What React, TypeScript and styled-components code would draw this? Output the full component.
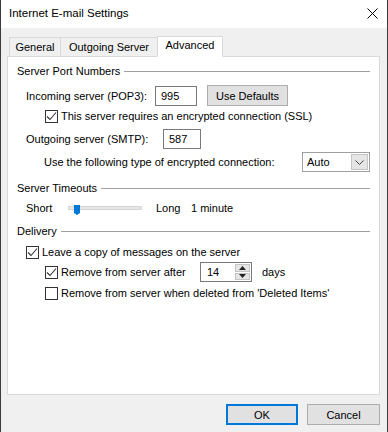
import React from "react";
import styled, { createGlobalStyle } from "styled-components";

const GlobalStyle = createGlobalStyle`
  html, body { margin: 0; padding: 0; background: #f0f0f0; }
  body { font-family: "Liberation Sans", Arial, sans-serif; font-size: 11px; color: #000; }
  * { box-sizing: border-box; }
`;

const Window = styled.div`
  width: 388px;
  height: 432px;
  border-left: 1px solid #3c3c3c;
  border-right: 1px solid #3c3c3c;
  background: #f0f0f0;
  display: flex;
  flex-direction: column;
  overflow: hidden;
`;

const TitleBar = styled.div`
  height: 28px;
  background: #fff;
  display: flex;
  align-items: center;
  justify-content: space-between;
  padding: 0 9px 2px 8px;
`;

const Title = styled.span`
  font-size: 11.5px;
`;

const Body = styled.div`
  flex: 1;
  display: flex;
  flex-direction: column;
  padding: 7px 7px 0 6px;
`;

const TabStrip = styled.div`
  display: flex;
  align-items: flex-end;
  height: 21px;
  padding-left: 2px;
  position: relative;
  z-index: 1;
`;

const Tab = styled.div<{ $w: number; $active?: boolean }>`
  width: ${(p) => p.$w}px;
  height: ${(p) => (p.$active ? 21 : 19)}px;
  display: flex;
  align-items: center;
  justify-content: center;
  border: 1px solid #d9d9d9;
  border-bottom: ${(p) => (p.$active ? "1px solid #fff" : "none")};
  border-right: ${(p) => (p.$active ? "1px solid #d9d9d9" : "none")};
  background: ${(p) => (p.$active ? "#fff" : "#f0f0f0")};
  margin-bottom: ${(p) => (p.$active ? -1 : 0)}px;
  padding-bottom: ${(p) => (p.$active ? 3 : 0)}px;
`;

const Panel = styled.div`
  height: 339px;
  background: #fff;
  border: 1px solid #d9d9d9;
  display: flex;
  flex-direction: column;
  padding: 6px 9px 0 9px;
`;

const Row = styled.div<{ $h: number; $mt: number; $pl?: number }>`
  height: ${(p) => p.$h}px;
  margin-top: ${(p) => p.$mt}px;
  padding-left: ${(p) => p.$pl ?? 0}px;
  display: flex;
  align-items: center;
  white-space: nowrap;
`;

const Rule = styled.div`
  flex: 1;
  height: 1px;
  background: #a0a0a0;
  margin-left: 4px;
`;

const Label = styled.span<{ $w?: number }>`
  ${(p) => (p.$w ? `width: ${p.$w}px;` : "")}
  display: inline-block;
  flex-shrink: 0;
`;

const TextInput = styled.div<{ $w: number }>`
  width: ${(p) => p.$w}px;
  height: 20px;
  border: 1px solid #7a7a7a;
  background: #fff;
  display: flex;
  align-items: center;
  padding-left: 5px;
`;

const Button = styled.div<{ $w: number; $default?: boolean; $ml?: number }>`
  width: ${(p) => p.$w}px;
  height: 21px;
  margin-left: ${(p) => p.$ml ?? 0}px;
  background: #e1e1e1;
  border: ${(p) => (p.$default ? "2px solid #0078d7" : "1px solid #adadad")};
  display: flex;
  align-items: center;
  justify-content: center;
`;

const Box = styled.div`
  width: 13px;
  height: 13px;
  border: 1px solid #333;
  background: #fff;
  margin-right: 3px;
  display: flex;
  align-items: center;
  justify-content: center;
  flex-shrink: 0;
`;

const Select = styled.div`
  width: 69px;
  height: 20px;
  border: 1px solid #a0a0a0;
  background: #fff;
  display: flex;
  align-items: center;
  justify-content: space-between;
  padding: 1px 1px 1px 4px;
`;

const SelectArrow = styled.div`
  width: 17px;
  height: 16px;
  background: #e5e5e5;
  border: 1px solid #c4c4c4;
  display: flex;
  align-items: center;
  justify-content: center;
`;

const Spin = styled.div`
  width: 52px;
  height: 20px;
  border: 1px solid #7a7a7a;
  background: #fff;
  display: flex;
  align-items: center;
  justify-content: space-between;
  padding: 1px 1px 1px 6px;
`;

const SpinButtons = styled.div`
  width: 15px;
  height: 16px;
  display: flex;
  flex-direction: column;
  gap: 1px;
`;

const SpinBtn = styled.div`
  flex: 1;
  background: #e5e5e5;
  border: 1px solid #c4c4c4;
  display: flex;
  align-items: center;
  justify-content: center;
`;

const Track = styled.div`
  width: 74px;
  height: 4px;
  background: #e7e7e7;
  border: 1px solid #d6d6d6;
  position: relative;
  margin: 0 14px 0 15px;
`;

const Thumb = styled.div`
  position: absolute;
  left: 5px;
  top: -2px;
  width: 6px;
  height: 8px;
  background: #0078d7;
  &::after {
    content: "";
    position: absolute;
    left: 0;
    top: 8px;
    border-left: 3px solid transparent;
    border-right: 3px solid transparent;
    border-top: 2px solid #0078d7;
  }
`;

const Gap = styled.span<{ $w: number }>`
  display: inline-block;
  width: ${(p) => p.$w}px;
`;

const Footer = styled.div`
  display: flex;
  justify-content: flex-end;
  gap: 9px;
  padding: 9px 0 0 0;
`;

const Check = () => (
  <svg width="11" height="11" viewBox="0 0 11 11">
    <path d="M1 5.5 L4 8.5 L10 1.5" fill="none" stroke="#333" strokeWidth="1.1" />
  </svg>
);

const Chevron = ({ up }: { up?: boolean }) => (
  <svg width="7" height="4" viewBox="0 0 7 4">
    <path d={up ? "M0 4 L3.5 0 L7 4 Z" : "M0 0 L3.5 4 L7 0 Z"} fill="#222" />
  </svg>
);

export default function App() {
  return (
    <>
      <GlobalStyle />
      <Window>
        <TitleBar>
          <Title>Internet E-mail Settings</Title>
          <svg width="11" height="11" viewBox="0 0 11 11">
            <path d="M0.5 0.5 L10.5 10.5 M10.5 0.5 L0.5 10.5" stroke="#000" strokeWidth="1" />
          </svg>
        </TitleBar>
        <Body>
          <TabStrip>
            <Tab $w={51}>General</Tab>
            <Tab $w={97}>Outgoing Server</Tab>
            <Tab $w={66} $active>Advanced</Tab>
          </TabStrip>
          <Panel>
            <Row $h={16} $mt={0}>
              <span>Server Port Numbers</span>
              <Rule />
            </Row>
            <Row $h={21} $mt={6} $pl={9}>
              <Label $w={129}>Incoming server (POP3):</Label>
              <TextInput $w={42}>995</TextInput>
              <Button $w={81} $ml={10}>Use Defaults</Button>
            </Row>
            <Row $h={16} $mt={2} $pl={28}>
              <Box><Check /></Box>
              <span>This server requires an encrypted connection (SSL)</span>
            </Row>
            <Row $h={20} $mt={5} $pl={9}>
              <Label $w={137}>Outgoing server (SMTP):</Label>
              <TextInput $w={38}>587</TextInput>
            </Row>
            <Row $h={20} $mt={3} $pl={27}>
              <Label $w={258}>Use the following type of encrypted connection:</Label>
              <Select>
                <span>Auto</span>
                <SelectArrow>
                  <svg width="9" height="5" viewBox="0 0 9 5">
                    <path d="M0.5 0.5 L4.5 4.5 L8.5 0.5" fill="none" stroke="#444" strokeWidth="1" />
                  </svg>
                </SelectArrow>
              </Select>
            </Row>
            <Row $h={16} $mt={8}>
              <span>Server Timeouts</span>
              <Rule />
            </Row>
            <Row $h={16} $mt={4} $pl={9}>
              <Label $w={27}>Short</Label>
              <Track><Thumb /></Track>
              <Label $w={35}>Long</Label>
              <span>1 minute</span>
            </Row>
            <Row $h={16} $mt={7}>
              <span>Delivery</span>
              <Rule />
            </Row>
            <Row $h={16} $mt={5} $pl={9}>
              <Box><Check /></Box>
              <span>Leave a copy of messages on the server</span>
            </Row>
            <Row $h={20} $mt={2} $pl={28}>
              <Box><Check /></Box>
              <Label $w={139}>Remove from server after</Label>
              <Spin>
                <span>14</span>
                <SpinButtons>
                  <SpinBtn><Chevron up /></SpinBtn>
                  <SpinBtn><Chevron /></SpinBtn>
                </SpinButtons>
              </Spin>
              <Gap $w={10} />
              <span>days</span>
            </Row>
            <Row $h={16} $mt={3} $pl={28}>
              <Box />
              <span>Remove from server when deleted from 'Deleted Items'</span>
            </Row>
          </Panel>
          <Footer>
            <Button $w={72} $default>OK</Button>
            <Button $w={73}>Cancel</Button>
          </Footer>
        </Body>
      </Window>
    </>
  );
}
